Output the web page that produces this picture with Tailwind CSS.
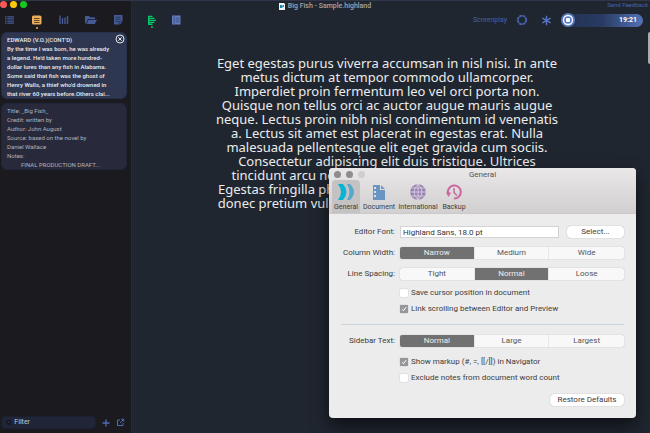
<!DOCTYPE html>
<html lang="en">
<head>
    <meta charset="UTF-8">
    <meta name="viewport" content="width=device-width, initial-scale=1.0">
    <title>Big Fish - Sample.highland</title>
    <script src="https://cdn.jsdelivr.net/npm/@tailwindcss/browser@4"></script>
</head>
<body class="relative flex min-h-screen overflow-hidden bg-[#202630] font-['Roboto',sans-serif]">

    <!-- Title bar -->
    <header class="absolute inset-x-0 top-0 flex h-3 items-center justify-center border-t border-[#30354a]">
        <div class="absolute left-0 top-0 flex gap-[3px]">
            <button aria-label="Close" class="size-[7px] rounded-full bg-[#fc5753]"></button>
            <button aria-label="Minimize" class="size-[7px] rounded-full bg-[#fdc80a]"></button>
            <button aria-label="Zoom" class="size-[7px] rounded-full bg-[#14c81e]"></button>
        </div>
        <h1 class="flex items-center gap-[3px] text-[7px] leading-[9px] font-medium text-[#a3a6ad]">
            <svg class="h-[7px] w-[6px]" viewBox="0 0 6 7"><path fill="#f1f3f5" d="M0 0h5l1 1v6H0z"/><path fill="#1c88b5" d="M1 2h2l1 1.5L3 5H1z"/><path fill="#d46" d="M4 2h1v2H4z"/></svg>
            Big Fish - Sample.highland
        </h1>
        <a href="#" class="absolute right-[2px] top-0 text-[6px] leading-[8px] text-[#4461ad]">Send Feedback</a>
    </header>

    <!-- Sidebar -->
    <aside class="flex w-[131px] shrink-0 flex-col border-r border-[#151920] bg-[#1b1a1f] pt-[14px]">
        <nav class="flex items-start gap-[15px] pl-1 text-[#455a96]">
            <button aria-label="Navigator"><svg class="size-[12px]" viewBox="0 0 12 12" fill="currentColor"><path d="M1 2.2h1.5v1.3H1zM3.3 2.2H10v1.3H3.3zM1 4.3h1.5v1.3H1zM3.3 4.3H10v1.3H3.3zM1 6.4h1.5v1.3H1zM3.3 6.4H10v1.3H3.3zM1 8.5h1.5v1.3H1zM3.3 8.5H10v1.3H3.3z"/></svg></button>
            <button aria-label="Bin" class="flex flex-col items-center gap-[1px] text-[#efae5c]">
                <svg class="size-[12px]" viewBox="0 0 12 12"><rect x="1" y="1.5" width="9.5" height="9" rx="1.6" fill="currentColor"/><path stroke="#3a2b1c" stroke-width=".8" d="M3 4.5h5.5M3 6.5h5.5M3 8.5h5.5"/></svg>
                <span class="size-[2px] rounded-full bg-current"></span>
            </button>
            <button aria-label="Statistics"><svg class="size-[12px]" viewBox="0 0 12 12" stroke="currentColor" stroke-width="1.4"><path d="M2 10V1.5M4.5 10V4M7 10V3.5M9.5 10V2"/></svg></button>
            <button aria-label="Assets"><svg class="size-[12px]" viewBox="0 0 12 12" fill="currentColor"><path d="M0 2h4l1 1.2h5V5H3L1 9.5H0zM3.4 5.7H12L9.8 10H1.6z"/></svg></button>
            <button aria-label="Scratchpad"><svg class="size-[12px]" viewBox="0 0 12 12"><path fill="currentColor" d="M2 1h8.5v6.5L8 10.5H2z"/><path stroke="#222842" stroke-width=".8" fill="none" d="M3.5 3.3h5M3.5 5.3h5M3.5 7.3H6M7 10.5v-3h3.5"/></svg></button>
        </nav>

        <div class="mt-[3px] mr-[3px] flex flex-1 flex-col gap-1 pl-[1px] text-[6px] leading-[9px] whitespace-nowrap">
            <article class="relative rounded-md border border-[#25304a] bg-[#2e3650] px-[5px] pt-[2px] text-[#e9eaee]">
                <h2 class="font-medium">EDWARD (V.O.)(CONT'D)</h2>
                <p class="font-medium">By the time I was born, he was already<br>a legend. He'd taken more hundred-<br>dollar lures than any fish in Alabama.<br>Some said that fish was the ghost of<br>Henry Walls, a thief who'd drowned in<br>that river 60 years before.Others clai...</p>
                <button aria-label="Remove" class="absolute right-[1px] top-[1px]"><svg class="size-[10px]" viewBox="0 0 10 10" fill="none" stroke="#e5e7ed"><circle cx="5" cy="5" r="4"/><path d="M3.3 3.3l3.4 3.4M6.7 3.3L3.3 6.7"/></svg></button>
            </article>
            <article class="rounded-md border border-[#20253a] bg-[#282a3c] px-[5px] pt-[2px] text-[#b0b2ba]">
                <p>Title: _Big Fish_<br>Credit: written by<br>Author: John August<br>Source: based on the novel by<br>Daniel Wallace<br>Notes:</p>
                <p class="pl-[14px]">FINAL PRODUCTION DRAFT...</p>
            </article>
        </div>

        <div class="mb-1 flex items-center gap-[6px] pl-[1px] text-[#4d6cb8]">
            <label class="flex h-[13px] w-[95px] items-center gap-[2px] rounded-sm border border-[#1b202f] bg-[#202637] pl-1">
                <svg class="size-[7px]" viewBox="0 0 7 7" fill="none" stroke="#0f1118"><circle cx="3" cy="3" r="2.3"/><path d="M4.7 4.7l1.8 1.8"/></svg>
                <input type="text" aria-label="Filter" placeholder="Filter" class="w-full text-[7px] leading-[9px] outline-none placeholder:text-[#c6c9d0]">
            </label>
            <button aria-label="Add"><svg class="size-[8px]" viewBox="0 0 8 8" stroke="currentColor" stroke-width="1.3"><path d="M4 .5v7M.5 4h7"/></svg></button>
            <button aria-label="Open in window"><svg class="size-[9px]" viewBox="0 0 9 9" fill="none" stroke="currentColor"><path d="M4 2H1.5v5.5H7V5M4 5l3.5-3.5M5.2 1.2h2.6v2.6"/></svg></button>
        </div>
    </aside>

    <!-- Editor -->
    <main class="min-w-0 flex-1 border-l border-[#232c35] pt-[13px]">
        <div class="flex h-[14px] items-center pr-[7px] pl-[14px] text-[#4460a8]">
            <button aria-label="Editor" class="relative text-[#0bc664]">
                <svg class="size-[12px]" viewBox="0 0 12 12" fill="currentColor"><path d="M2 1.7h4.5v1.4H2zM2 3.7h6.5v1.4H2zM2 5.7h8v1.4H2zM2 7.7h6.5v1.4H2zM2 9.6h4.5V11H2zM2 1.7h1.4V11H2z"/></svg>
                <span class="absolute top-[12px] left-[5px] size-[2px] rounded-full bg-current"></span>
            </button>
            <button aria-label="Preview" class="ml-3"><svg class="size-[12px]" viewBox="0 0 12 12"><rect x="2" y="1.5" width="8.5" height="9" fill="#637cbc"/><path stroke="#33467c" stroke-width=".8" d="M4 2v8M5.5 4h4M5.5 6h4M5.5 8h4"/></svg></button>
            <button class="ml-auto text-[7px] leading-[9px]">Screenplay</button>
            <button aria-label="Theme" class="ml-[9px]"><svg class="size-[12px]" viewBox="0 0 12 12" fill="none" stroke="currentColor" stroke-width="2"><circle cx="6" cy="6" r="4.2" stroke-dasharray="2.8 .5"/></svg></button>
            <button aria-label="Revisions" class="ml-[13px]"><svg class="size-[11px]" viewBox="0 0 11 11" stroke="#5675c4" stroke-width="1.4"><path d="M5.5 .8v9.4M1.4 3.1l8.2 4.8M9.6 3.1L1.4 7.9"/></svg></button>
            <button class="ml-[9px] flex h-[13px] w-[82px] items-center justify-between rounded-full bg-linear-to-r from-[#243050] via-[#283b63] to-[#5473b8] pr-[6px] text-[7px] leading-[9px] font-bold text-white">
                <svg class="size-[14px]" viewBox="0 0 14 14"><circle cx="7" cy="7" r="7" fill="#5b7bc0"/><circle cx="7" cy="7" r="4.5" fill="none" stroke="#fff" stroke-width="1.3"/><rect x="5" y="5" width="4" height="4" rx="1" fill="#fff"/></svg>
                19:21
            </button>
        </div>

        <p class="mt-[29px] pr-2 text-center font-['Noto_Sans',sans-serif] text-[13px] leading-[14px] whitespace-nowrap text-[#ebecec]">
            Eget egestas purus viverra accumsan in nisl nisi. In ante<br>
            metus dictum at tempor commodo ullamcorper.<br>
            Imperdiet proin fermentum leo vel orci porta non.<br>
            Quisque non tellus orci ac auctor augue mauris augue<br>
            neque. Lectus proin nibh nisl condimentum id venenatis<br>
            a. Lectus sit amet est placerat in egestas erat. Nulla<br>
            malesuada pellentesque elit eget gravida cum sociis.<br>
            Consectetur adipiscing elit duis tristique. Ultrices<br>
            tincidunt arcu non sodales neque sodales ut etiam.<br>
            Egestas fringilla phasellus faucibus scelerisque eleifend<br>
            donec pretium vulputate sapien nec sagittis aliquam et.
        </p>
        <div class="absolute top-8 right-0 h-8 w-[2px] rounded-l bg-[#a9abae]"></div>
    </main>

    <!-- Preferences window -->
    <section aria-labelledby="prefs-title" class="absolute top-[168px] right-[14px] w-[307px] overflow-hidden rounded-[4px] bg-[#ececec] text-[8px] leading-[10px] text-[#3c3c3c] shadow-[0_8px_18px_rgba(0,0,0,0.6)]">
        <header class="relative h-[46px] border-b border-[#cbc9ca] bg-linear-to-b from-[#e9e7e8] to-[#d1cfd0]">
            <div class="absolute top-[3px] left-[5px] flex gap-[5px]">
                <button aria-label="Close" class="size-[7px] rounded-full bg-[#8e8d8e]"></button>
                <button aria-label="Minimize" class="size-[7px] rounded-full bg-[#8e8d8e]"></button>
                <button aria-label="Zoom" class="size-[7px] rounded-full bg-[#cfcdce]"></button>
            </div>
            <h2 id="prefs-title" class="pt-[2px] text-center text-[#555]">General</h2>
            <nav class="flex gap-[3px] pl-[3px] text-[7px] leading-[9px]">
                <button class="flex h-[33px] w-[28px] flex-col items-center gap-[3px] rounded-t-sm bg-[#c4c2c3] pt-[4px]">
                    <svg class="size-[16px]" viewBox="0 0 16 16"><path fill="#05b5d8" d="M0 0h5q3.500 4 3.500 8T5 16H0Q3 12 3 8T0 0z"/><path fill="#55a9cc" d="M9 0h3q4 4 4 8t-4 8H9q2.500-4 2.500-8T9 0z"/></svg>
                    General
                </button>
                <button class="flex w-[32px] flex-col items-center gap-[3px] pt-[4px]">
                    <svg class="size-[16px]" viewBox="0 0 16 16"><path fill="#6995c2" d="M2 1h7v5h5v10H2z"/><path fill="#7895c6" d="M10 1l4 4h-4z"/><path fill="#d9e0e8" d="M3 3h2v2H3zM3 7h2v2H3zM3 11h2v2H3z"/></svg>
                    Document
                </button>
                <button class="flex w-[40px] flex-col items-center gap-[3px] pt-[4px]">
                    <svg class="size-[16px]" viewBox="0 0 16 16"><circle cx="8" cy="8" r="7.8" fill="#9881b4"/><path fill="none" stroke="#d9d3df" stroke-width=".9" d="M8 0v16M0 8h16M1.5 4h13M1.5 12h13M8 0Q0 8 8 16M8 0q8 8 0 16"/></svg>
                    International
                </button>
                <button class="flex w-[26px] flex-col items-center gap-[3px] pt-[4px]">
                    <svg class="size-[16px]" viewBox="0 0 16 16" fill="none" stroke="#c9679f" stroke-width="2"><path d="M2 9.5A6.5 6.5 0 1 1 8 14.5"/><path stroke-width="1.5" d="M8 4v4.5l3 3"/><path fill="#c9679f" stroke="none" d="M0 8.5h5L2.5 13z"/></svg>
                    Backup
                </button>
            </nav>
        </header>

        <form class="px-3 py-3" onsubmit="return false">
            <div class="flex items-center gap-[5px]">
                <label for="font" class="w-[54px] text-right">Editor Font:</label>
                <input id="font" type="text" value="Highland Sans, 18.0 pt" class="h-3 min-w-0 flex-1 border border-[#d4d4d4] bg-white px-[2px] text-[#333]">
                <button class="ml-[3px] h-3 w-[57px] rounded-sm bg-white shadow-[0_0_1px_#888]">Select...</button>
            </div>

            <fieldset class="mt-[9px] flex items-center gap-[5px]">
                <span class="w-[54px] text-right whitespace-nowrap">Column Width:</span>
                <div class="grid flex-1 grid-cols-3 divide-x divide-[#e8e8e8] overflow-hidden rounded-xs bg-[#f8f8f8] text-center leading-[12px] text-[#555] shadow-[0_0_1px_#999]">
                    <label class="has-checked:bg-[#717171] has-checked:text-[#eee]"><input type="radio" name="width" class="sr-only" checked>Narrow</label>
                    <label class="has-checked:bg-[#717171] has-checked:text-[#eee]"><input type="radio" name="width" class="sr-only">Medium</label>
                    <label class="has-checked:bg-[#717171] has-checked:text-[#eee]"><input type="radio" name="width" class="sr-only">Wide</label>
                </div>
            </fieldset>

            <fieldset class="mt-[9px] flex items-center gap-[5px]">
                <span class="w-[54px] text-right whitespace-nowrap">Line Spacing:</span>
                <div class="grid flex-1 grid-cols-3 divide-x divide-[#e8e8e8] overflow-hidden rounded-xs bg-[#f8f8f8] text-center leading-[12px] text-[#555] shadow-[0_0_1px_#999]">
                    <label class="has-checked:bg-[#717171] has-checked:text-[#eee]"><input type="radio" name="spacing" class="sr-only">Tight</label>
                    <label class="has-checked:bg-[#717171] has-checked:text-[#eee]"><input type="radio" name="spacing" class="sr-only" checked>Normal</label>
                    <label class="has-checked:bg-[#717171] has-checked:text-[#eee]"><input type="radio" name="spacing" class="sr-only">Loose</label>
                </div>
            </fieldset>

            <div class="mt-2 flex flex-col gap-[6px] pl-[59px]">
                <label class="flex items-center gap-[3px]">
                    <span class="grid size-[8px] place-items-center">
                        <input type="checkbox" class="peer col-start-1 row-start-1 size-[8px] appearance-none rounded-[1px] bg-white shadow-[0_0_1px_#888] checked:bg-[#969599]">
                        <svg class="pointer-events-none invisible col-start-1 row-start-1 size-[6px] peer-checked:visible" viewBox="0 0 6 6" fill="none" stroke="#fff"><path d="M1 3.2l1.5 1.6L5 1.2"/></svg>
                    </span>
                    Save cursor position in document
                </label>
                <label class="flex items-center gap-[3px]">
                    <span class="grid size-[8px] place-items-center">
                        <input type="checkbox" checked class="peer col-start-1 row-start-1 size-[8px] appearance-none rounded-[1px] bg-white shadow-[0_0_1px_#888] checked:bg-[#969599]">
                        <svg class="pointer-events-none invisible col-start-1 row-start-1 size-[6px] peer-checked:visible" viewBox="0 0 6 6" fill="none" stroke="#fff"><path d="M1 3.2l1.5 1.6L5 1.2"/></svg>
                    </span>
                    Link scrolling between Editor and Preview
                </label>
            </div>

            <hr class="mt-[10px] border-[#ccd4dc]">

            <fieldset class="mt-[10px] flex items-center gap-[5px]">
                <span class="w-[54px] text-right whitespace-nowrap">Sidebar Text:</span>
                <div class="grid flex-1 grid-cols-3 divide-x divide-[#e8e8e8] overflow-hidden rounded-xs bg-[#f8f8f8] text-center leading-[12px] text-[#555] shadow-[0_0_1px_#999]">
                    <label class="has-checked:bg-[#717171] has-checked:text-[#eee]"><input type="radio" name="sidebar" class="sr-only" checked>Normal</label>
                    <label class="has-checked:bg-[#717171] has-checked:text-[#eee]"><input type="radio" name="sidebar" class="sr-only">Large</label>
                    <label class="has-checked:bg-[#717171] has-checked:text-[#eee]"><input type="radio" name="sidebar" class="sr-only">Largest</label>
                </div>
            </fieldset>

            <div class="mt-[10px] flex flex-col gap-[6px] pl-[59px]">
                <label class="flex items-center gap-[3px]">
                    <span class="grid size-[8px] place-items-center">
                        <input type="checkbox" checked class="peer col-start-1 row-start-1 size-[8px] appearance-none rounded-[1px] bg-white shadow-[0_0_1px_#888] checked:bg-[#969599]">
                        <svg class="pointer-events-none invisible col-start-1 row-start-1 size-[6px] peer-checked:visible" viewBox="0 0 6 6" fill="none" stroke="#fff"><path d="M1 3.2l1.5 1.6L5 1.2"/></svg>
                    </span>
                    Show markup (#, =, [[/]]) in Navigator
                </label>
                <label class="flex items-center gap-[3px]">
                    <span class="grid size-[8px] place-items-center">
                        <input type="checkbox" class="peer col-start-1 row-start-1 size-[8px] appearance-none rounded-[1px] bg-white shadow-[0_0_1px_#888] checked:bg-[#969599]">
                        <svg class="pointer-events-none invisible col-start-1 row-start-1 size-[6px] peer-checked:visible" viewBox="0 0 6 6" fill="none" stroke="#fff"><path d="M1 3.2l1.5 1.6L5 1.2"/></svg>
                    </span>
                    Exclude notes from document word count
                </label>
            </div>

            <div class="mt-[11px] flex justify-end">
                <button class="h-3 w-[74px] rounded-sm bg-white shadow-[0_0_1px_#888]">Restore Defaults</button>
            </div>
        </form>
    </section>

</body>
</html>
